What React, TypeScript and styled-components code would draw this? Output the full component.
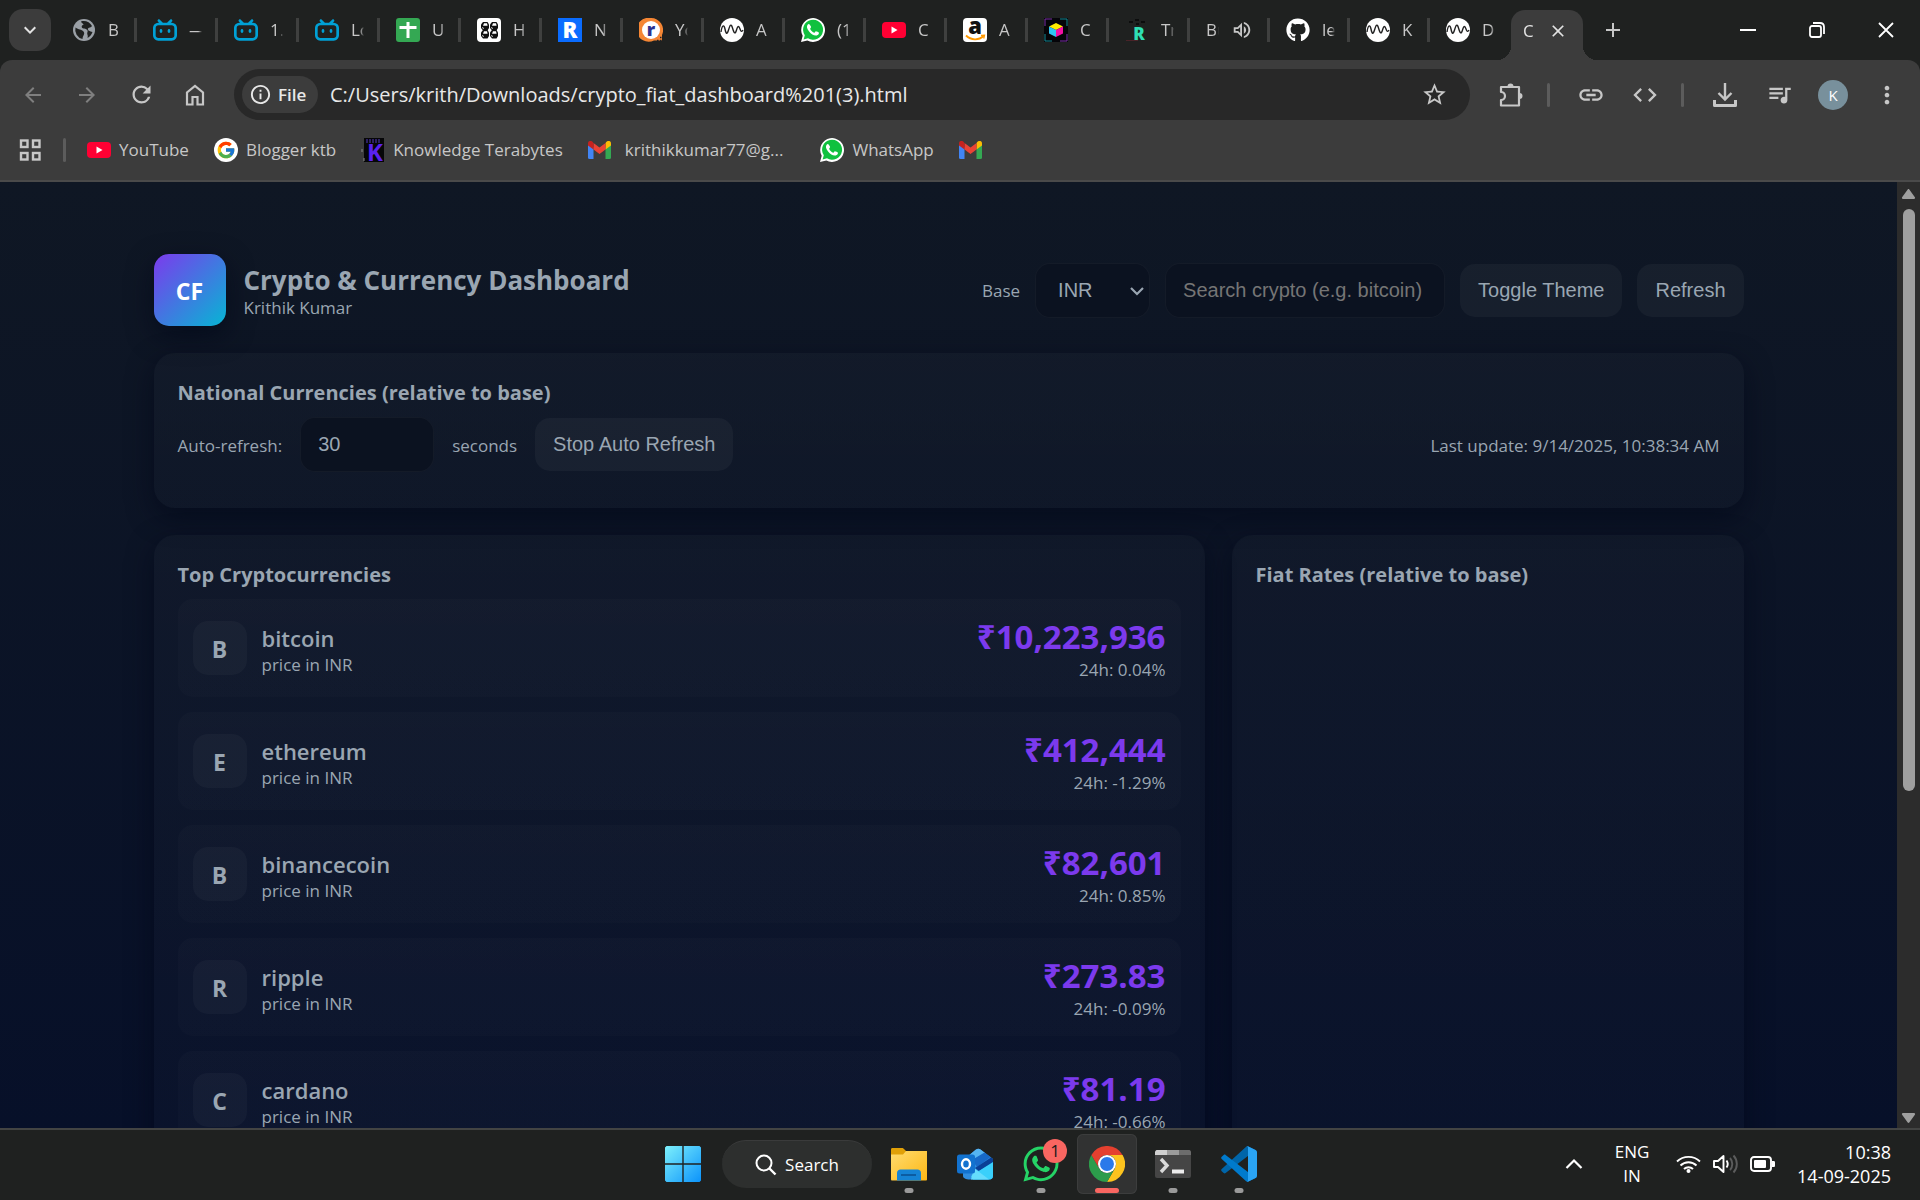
import React, { useState } from "react";
import styled, { createGlobalStyle } from "styled-components";
import { SiBilibili } from "react-icons/si";
import { FaWhatsapp, FaGithub } from "react-icons/fa";
import { FcGoogle } from "react-icons/fc";
import {
  MdArrowBack,
  MdArrowForward,
  MdRefresh,
  MdStarBorder,
  MdLink,
  MdCode,
  MdQueueMusic,
  MdMoreVert,
  MdPublic,
  MdAdd,
  MdClose,
  MdKeyboardArrowDown,
  MdOutlineInfo,
  MdOutlineVolumeUp,
} from "react-icons/md";

const ui = '"Open Sans", "Noto Sans", sans-serif';
const control = '"Liberation Sans", Arial, sans-serif';

const GlobalStyle = createGlobalStyle`
  *, *::before, *::after { box-sizing: border-box; }
  body { margin: 0; background: #1f2120; font-family: ${ui}; }
  button, input, select { font: inherit; color: inherit; margin: 0; }
  h1, h2, h3, p, ul { margin: 0; padding: 0; }
  ul { list-style: none; }
`;

/* ---------- window frame ---------- */

const Desktop = styled.div`
  display: flex;
  flex-direction: column;
  height: 100vh;
  overflow: hidden;
`;

const PlainButton = styled.button`
  display: flex;
  align-items: center;
  justify-content: center;
  padding: 0;
  border: 0;
  background: none;
`;

const TabStrip = styled.div`
  display: flex;
  align-items: center;
  height: 60px;
  flex: none;
  padding-left: 9px;
  background: #1f2120;
  color: #c7c7c7;
`;

const TabSearch = styled(PlainButton)`
  width: 42px;
  height: 42px;
  margin-right: 5px;
  border-radius: 14px;
  background: #3c3c3c;
  color: #e3e3e3;
  font-size: 24px;
`;

const Tabs = styled.div`
  display: flex;
  align-items: center;
  align-self: stretch;
`;

const Tab = styled(PlainButton)<{ $narrow?: boolean; $last?: boolean }>`
  justify-content: flex-start;
  gap: 12px;
  width: ${(p) => (p.$narrow ? 80 : 81)}px;
  height: 24px;
  padding-left: 16px;
  border-right: 3px solid ${(p) => (p.$last ? "transparent" : "#3f403f")};
`;

const TabLabel = styled.span`
  width: 13px;
  overflow: hidden;
  white-space: nowrap;
  text-align: left;
  font-size: 17px;
  line-height: 26px;
  mask-image: linear-gradient(90deg, #000 70%, transparent);
`;

const Favicon = styled.span`
  display: flex;
  width: 24px;
  height: 24px;
  flex: none;
  font-size: 24px;

  svg {
    width: 24px;
    height: 24px;
  }
`;

const ActiveTab = styled.div`
  position: relative;
  display: flex;
  align-items: center;
  align-self: flex-end;
  gap: 12px;
  width: 72px;
  height: 50px;
  margin-left: 1px;
  padding: 0 0 9px 12px;
  border-radius: 14px 14px 0 0;
  background: #3c3c3c;
  color: #e3e3e3;
  font-size: 20px;

  &::before,
  &::after {
    content: "";
    position: absolute;
    bottom: 0;
    width: 14px;
    height: 14px;
  }
  &::before {
    right: 100%;
    background: radial-gradient(circle at 0 0, transparent 14px, #3c3c3c 14px);
  }
  &::after {
    left: 100%;
    background: radial-gradient(circle at 100% 0, transparent 14px, #3c3c3c 14px);
  }
`;

const NewTab = styled(PlainButton)`
  width: 36px;
  height: 36px;
  margin-left: 12px;
  font-size: 24px;
`;

const WindowButtons = styled.div`
  display: flex;
  align-self: stretch;
  margin-left: auto;
  color: #fff;
`;

const WindowButton = styled(PlainButton)`
  width: 69px;
`;

const Toolbar = styled.div`
  display: flex;
  align-items: center;
  gap: 18px;
  height: 69px;
  flex: none;
  padding: 0 15px;
  border-radius: 12px 12px 0 0;
  background: #3c3c3c;
  color: #c7c7c7;
`;

const ToolbarBack = styled.div`
  background: linear-gradient(#1f2120 50%, #3c3c3c 50%);
`;

const ToolButton = styled(PlainButton)<{ $dim?: boolean }>`
  width: 36px;
  height: 36px;
  flex: none;
  font-size: 24px;
  color: ${(p) => (p.$dim ? "#7f7f7f" : "#c7c7c7")};
`;

const Omnibox = styled.div`
  display: flex;
  align-items: center;
  flex: 1;
  height: 51px;
  margin: 0 5px 0 3px;
  padding: 0 18px 0 8px;
  border-radius: 26px;
  background: #282828;
  color: #e8e8e8;
`;

const SchemeChip = styled(PlainButton)`
  justify-content: flex-start;
  gap: 6px;
  width: 76px;
  height: 37px;
  margin-right: 12px;
  padding-left: 7px;
  border-radius: 19px;
  background: #3c3c3c;
  font-size: 17px;
  font-weight: 600;

  svg {
    font-size: 23px;
  }
`;

const Address = styled.input`
  flex: 1;
  min-width: 0;
  padding: 0;
  border: 0;
  outline: 0;
  background: none;
  font-size: 20px;
`;

const Separator = styled.span<{ $wide?: boolean }>`
  width: 3px;
  height: 24px;
  margin-right: ${(p) => (p.$wide ? 5 : 0)}px;
  border-radius: 2px;
  background: #5c5c5c;
`;

const Avatar = styled.span`
  display: flex;
  align-items: center;
  justify-content: center;
  width: 30px;
  height: 30px;
  border-radius: 50%;
  background: #78909c;
  color: #fff;
  font-size: 15px;
`;

const Bookmarks = styled.nav`
  display: flex;
  align-items: center;
  height: 53px;
  flex: none;
  padding: 0 15px 9px 18px;
  border-bottom: 2px solid #4a4a4a;
  background: #3c3c3c;
  color: #c7c7c7;
`;

const AppsButton = styled(PlainButton)`
  margin-right: 21px;
`;

const BookmarkList = styled.div`
  display: flex;
  align-items: center;
  gap: 25px;
  margin-left: 21px;
`;

const BookmarkLink = styled.a<{ $roomy?: boolean }>`
  display: flex;
  align-items: center;
  gap: ${(p) => (p.$roomy ? 14 : 8)}px;
  margin-right: ${(p) => (p.$roomy ? 12 : 0)}px;
  color: inherit;
  text-decoration: none;
  font-size: 17px;
  line-height: 24px;
`;

/* ---------- dashboard page ---------- */

const Viewport = styled.div`
  display: flex;
  flex: 1;
  min-height: 0;
`;

const Page = styled.main`
  flex: 1;
  min-width: 0;
  overflow: hidden;
  padding: 72px 24px 0;
  background: linear-gradient(180deg, #0f1724 0%, #071029 100%);
  color: #9aa6b2;
`;

const Container = styled.div`
  display: flex;
  flex-direction: column;
  gap: 27px;
  max-width: 1590px;
  margin: 0 auto;
`;

const Header = styled.header`
  display: flex;
  align-items: center;
  justify-content: space-between;
`;

const Brand = styled.div`
  display: flex;
  align-items: center;
  gap: 18px;
`;

const Logo = styled.div`
  display: flex;
  align-items: center;
  justify-content: center;
  width: 72px;
  height: 72px;
  padding-top: 2px;
  border-radius: 15px;
  background: linear-gradient(135deg, #7c3aed, #06b6d4);
  box-shadow: 0 9px 27px rgba(2, 6, 23, 0.6);
  color: #fff;
  font-size: 23px;
  font-weight: 700;
`;

const TextStack = styled.div`
  padding-top: 4px;
`;

const Title = styled.h1`
  font-size: 26px;
  line-height: 32px;
  font-weight: 700;
`;

const Small = styled.p`
  font-size: 17px;
  line-height: 24px;
`;

const Controls = styled.div`
  display: flex;
  align-items: center;
  gap: 15px;
`;

const FieldLabel = styled.label`
  padding-top: 2px;
  font-size: 17px;
  line-height: 24px;
`;

const SelectWrap = styled.div`
  position: relative;

  svg {
    position: absolute;
    right: 5px;
    top: 20px;
    pointer-events: none;
  }
`;

const fieldStyle = `
  height: 55px;
  border: 1px solid rgba(255, 255, 255, 0.04);
  border-radius: 15px;
  background: #0b1220;
  outline: 0;
  font-family: ${control};
  font-size: 20px;
`;

const Select = styled.select`
  ${fieldStyle}
  appearance: none;
  width: 115px;
  padding: 0 22px;
  color: #9aa6b2;
`;

const TextField = styled.input<{ $width: number }>`
  ${fieldStyle}
  appearance: textfield;
  width: ${(p) => p.$width}px;
  padding: 0 17px;

  &::placeholder {
    color: #757575;
  }
  &::-webkit-inner-spin-button {
    display: none;
  }
`;

const Button = styled.button`
  height: 53px;
  padding: 0 18px;
  border: 0;
  border-radius: 15px;
  background: rgba(255, 255, 255, 0.04);
  font-family: ${control};
  font-size: 20px;
`;

const Card = styled.section`
  padding: 24px;
  border-radius: 21px;
  background: linear-gradient(180deg, rgba(255, 255, 255, 0.02), rgba(255, 255, 255, 0.01));
  box-shadow: 0 9px 27px rgba(2, 6, 23, 0.6);
`;

const CardTitle = styled.h2`
  margin-bottom: 8px;
  font-size: 20px;
  line-height: 32px;
  font-weight: 700;
`;

const RefreshRow = styled.div`
  display: flex;
  align-items: center;
  gap: 18px;
  margin-bottom: 12px;
`;

const RowNote = styled(Small)<{ $end?: boolean }>`
  padding-top: 2px;
  margin-left: ${(p) => (p.$end ? "auto" : 0)};
`;

const Columns = styled.div`
  display: grid;
  grid-template-columns: 1051fr 512fr;
  gap: 27px;
`;

const CoinList = styled.ul`
  display: flex;
  flex-direction: column;
  gap: 15px;
`;

const CoinRow = styled.li`
  display: flex;
  align-items: center;
  gap: 15px;
  height: 98px;
  padding: 0 15px;
  border-radius: 15px;
  background: linear-gradient(180deg, rgba(255, 255, 255, 0.015), rgba(255, 255, 255, 0.01));
`;

const CoinBadge = styled.div`
  display: flex;
  align-items: center;
  justify-content: center;
  width: 54px;
  height: 54px;
  padding-top: 2px;
  border-radius: 15px;
  background: rgba(255, 255, 255, 0.03);
  font-size: 23px;
  font-weight: 700;
`;

const CoinName = styled.h3`
  font-size: 22px;
  line-height: 30px;
  font-weight: 600;
`;

const CoinValue = styled.div`
  margin-left: auto;
  padding-top: 2px;
  text-align: right;
`;

const Price = styled.p`
  color: #7c3aed;
  font-size: 33px;
  line-height: 42px;
  font-weight: 700;
`;

const Scrollbar = styled.div`
  display: flex;
  flex-direction: column;
  align-items: center;
  justify-content: space-between;
  width: 23px;
  flex: none;
  padding: 6px 0 4px;
  background: #2c2c2c;
`;

const Track = styled.div`
  flex: 1;
  width: 12px;
  margin: 9px 0 7px;
`;

const Thumb = styled.div`
  height: 65%;
  border-radius: 6px;
  background: #9f9f9f;
`;

/* ---------- taskbar ---------- */

const Taskbar = styled.footer`
  display: grid;
  grid-template-columns: 1fr auto 1fr;
  align-items: center;
  height: 72px;
  flex: none;
  padding-bottom: 2px;
  border-top: 2px solid #434443;
  background: #1f2120;
  color: #fff;
`;

const Apps = styled.div`
  grid-column: 2;
  display: flex;
  align-items: center;
  gap: 6px;
  padding-left: 2px;
`;

const AppTile = styled(PlainButton)<{ $active?: boolean }>`
  position: relative;
  width: 60px;
  height: 60px;
  border-radius: 6px;
  background: ${(p) => (p.$active ? "#313232" : "none")};
  box-shadow: ${(p) => (p.$active ? "inset 0 0 0 1px #3c3d3d" : "none")};
`;

const RunMark = styled.span<{ $active?: boolean }>`
  position: absolute;
  left: 50%;
  bottom: 1px;
  width: ${(p) => (p.$active ? 24 : 9)}px;
  height: 5px;
  border-radius: 3px;
  transform: translateX(-50%);
  background: ${(p) => (p.$active ? "#f96661" : "#9a9a9a")};
`;

const CountBadge = styled.span`
  position: absolute;
  top: 5px;
  right: 4px;
  width: 24px;
  height: 24px;
  border-radius: 50%;
  background: #f96661;
  color: #1b1b1b;
  font-size: 17px;
  line-height: 24px;
`;

const SearchPill = styled(PlainButton)`
  gap: 8px;
  width: 150px;
  height: 48px;
  margin: 0 1px 0 3px;
  border-radius: 24px;
  border-top: 1px solid #3a3b3b;
  background: #2d2f2e;
  font-size: 17px;
`;

const Tray = styled.div`
  display: flex;
  align-items: center;
  justify-content: flex-end;
  padding-right: 29px;
  font-size: 18px;
  line-height: 24px;
`;

const Language = styled(PlainButton)`
  width: 60px;
  margin: 0 14px 0 19px;
  text-align: center;
  font-size: 17px;
`;

const QuickSettings = styled(PlainButton)`
  gap: 12px;
`;

const Clock = styled(PlainButton)`
  margin-left: 22px;
  text-align: right;
`;

/* ---------- drawings ---------- */

const RoundedTile = ({ fill }: { fill: string }) => <rect width="24" height="24" rx="4" fill={fill} />;

const GlobeIcon = () => (
  <svg viewBox="0 0 24 24">
    <circle cx="12" cy="12" r="11" fill="#9aa0a6" />
    <path
      d="M3.500 9.500c3 2.500 6 1.500 8 4s-1 4-1 7.500A9.500 9.500 0 0 1 3.500 9.500zM9 3.500c4-1.500 9 .5 11 4.500-1 2-3 1-4 2.500s2 3 4.500 3.500c-1 3-3 5-5 6 1-3-1-4 0-6s-2-3.500-4-3.500-2.500-3-.5-3.500S9.500 5.500 9 3.500z"
      fill="#1f2120"
    />
  </svg>
);

const YouTubeIcon = () => (
  <svg width="24" height="24" viewBox="0 0 24 24">
    <rect y="4" width="24" height="16" rx="4" fill="#ff0033" />
    <path d="M9.500 8.500v7l6-3.500z" fill="#fff" />
  </svg>
);

const WhatsAppBubble = () => (
  <svg width="24" height="24" viewBox="0 0 24 24">
    <path d="M0 24l1.700-6.200A11.900 11.900 0 1 1 6.300 22.400z" fill="#fff" />
    <path d="M2.600 21.400l1.200-4.100A10 10 0 1 1 7 20.300z" fill="#10c13f" />
    <path
      d="M8.500 6.500c-.5-.6-1.200-.5-1.700.1-1.600 1.900-.8 4.200 1.300 6.900 2.300 2.900 5 4.500 7.600 4 1.400-.3 2.400-1.500 2.200-2.700-.1-.5-2.700-1.700-3.100-1.500-.5.3-.9 1.500-1.500 1.400-1.700-.5-3.400-2.200-4.100-3.800-.2-.5.9-1.100.9-1.800 0-.6-1.100-2.300-1.600-2.600z"
      fill="#fff"
    />
  </svg>
);

const WaveIcon = () => (
  <svg width="24" height="24" viewBox="0 0 24 24">
    <circle cx="12" cy="12" r="12" fill="#fff" />
    <path
      d="M1 14C2 7 4 6 5 11s2 6 3.500 1S11 5 12.500 10s2.500 7 4 2S19 8 20 11s2 3 3 1"
      fill="none"
      stroke="#222"
      strokeWidth="1.400"
    />
  </svg>
);

const SheetIcon = () => (
  <svg viewBox="0 0 24 24">
    <rect width="24" height="24" rx="3" fill="#34a853" />
    <path d="M12 4v16M3.500 9.500h17" stroke="#fff" strokeWidth="3" />
  </svg>
);

const HexTilesIcon = () => (
  <svg viewBox="0 0 24 24">
    <RoundedTile fill="#fff" />
    {[3, 12].map((x) =>
      [4, 12].map((y) => (
        <g key={`${x}-${y}`} transform={`translate(${x} ${y})`}>
          <path d="M3 0h4.500L9 2.500V6L7.500 8.500H3L1 6V2.500z" fill="#111" />
          <path d="M4 1.200h3l.6 2.500H3z" fill="#fff" />
          <path d="M2.500 5l1 2" stroke="#fff" strokeWidth=".8" />
        </g>
      ))
    )}
  </svg>
);

const LetterTile = ({ letter, bg, fg, size = 20 }: { letter: string; bg: string; fg: string; size?: number }) => (
  <svg viewBox="0 0 24 24">
    <rect width="24" height="24" fill={bg} />
    <text x="12" y="20" textAnchor="middle" fontFamily={ui} fontWeight="800" fontSize={size} fill={fg}>
      {letter}
    </text>
  </svg>
);

const OrangeRIcon = () => (
  <svg viewBox="0 0 24 24">
    <path d="M12 0a12 12 0 0 1 11 17v5.500H15A12 12 0 1 1 12 0z" fill="#f58634" />
    <circle cx="12" cy="12" r="9" fill="#fff" />
    <path d="M18 22.500h1.500M21 22.500h1.500M21 19.500h1.500" stroke="#222" strokeWidth="1.500" />
    <text x="12" y="18" textAnchor="middle" fontFamily={ui} fontWeight="800" fontSize="18" fill="#2b3190">
      r
    </text>
  </svg>
);

const AmazonIcon = () => (
  <svg viewBox="0 0 24 24">
    <RoundedTile fill="#fff" />
    <text x="12" y="16" textAnchor="middle" fontFamily={ui} fontWeight="800" fontSize="22" fill="#111">
      a
    </text>
    <path d="M3 17.500c5 5 13 5 17.500.5" fill="none" stroke="#f90" strokeWidth="1.800" />
    <path d="M18 17.500l3.500-.3-.8 3.300" fill="none" stroke="#f90" strokeWidth="1.300" />
  </svg>
);

const CubeIcon = () => (
  <svg viewBox="0 0 24 24">
    <rect width="24" height="24" fill="#050509" />
    <path d="M1 8V1h7M23 16v7h-7" stroke="#7c2fa8" fill="none" />
    <path d="M16 1h7v7M8 23H1v-7" stroke="#138a94" fill="none" />
    <path d="M12 5l7 3.500-7 3.500-7-3.500z" fill="#ffed00" />
    <path d="M5 8.500l7 3.500v7l-7-3.500z" fill="#2fc4f2" />
    <path d="M19 8.500L12 12v7l7-3.500z" fill="#f40fa5" />
  </svg>
);

const GreenRIcon = () => (
  <svg viewBox="0 0 24 24">
    <path d="M4 4h4M10 2h4M16 4h4M11 6h3" stroke="#0c0d0d" strokeWidth="2" />
    <path d="M1 22.500h12" stroke="#4a2328" />
    <text x="14" y="22" textAnchor="middle" fontFamily={ui} fontWeight="800" fontSize="17" fill="#2fe0b5">
      R
    </text>
  </svg>
);

const GmailIcon = () => (
  <svg width="23" height="18" viewBox="0 0 46 36">
    <path d="M0 6v27a3 3 0 0 0 3 3h8V13z" fill="#4285f4" />
    <path d="M46 6v27a3 3 0 0 1-3 3h-8V13z" fill="#34a853" />
    <path d="M35 4v13l11-8V5c0-5-5-6.500-8.500-4z" fill="#fbbc04" />
    <path d="M11 17V4l12 9 12-9v13l-12 9z" fill="#ea4335" />
    <path d="M0 5v4l11 8V4L8.500 1C5-1.500 0 0 0 5z" fill="#c5221f" />
  </svg>
);

const PurpleKIcon = () => (
  <svg width="24" height="24" viewBox="0 0 24 24">
    <rect x="3" width="20" height="24" fill="#060608" />
    <path d="M5 2h15M5 4h15" stroke="#3a2a80" strokeWidth="1.500" strokeDasharray="2 1" />
    <path d="M1 11v3M3 20v3" stroke="#8a8a8a" />
    <text x="14" y="23" textAnchor="middle" fontFamily={ui} fontWeight="700" fontSize="24" fill="#5a22f0">
      K
    </text>
  </svg>
);

const HomeIcon = () => (
  <svg width="24" height="24" viewBox="0 0 24 24" fill="none" stroke="currentColor" strokeWidth="2.200">
    <path d="M4 21.500V9.500L12 3l8 6.500v12h-5.500V14h-5v7.500z" />
  </svg>
);

const ExtensionIcon = () => (
  <svg width="26" height="26" viewBox="0 0 26 26">
    <path
      d="M3 5H21v18.500H3v-5.500c2 0 4-1.500 4-4s-2-4-4-4V5z"
      fill="none"
      stroke="currentColor"
      strokeWidth="2.200"
      strokeLinejoin="round"
    />
    <path d="M9.500 4.500a3 3 0 0 1 6 0zM21.500 11v6a3 3 0 0 0 0-6z" fill="currentColor" />
  </svg>
);

const DownloadIcon = () => (
  <svg width="26" height="26" viewBox="0 0 26 26" fill="none" stroke="currentColor">
    <path d="M13 1v16M6.500 11l6.500 6.500 6.500-6.500" strokeWidth="2.400" />
    <path d="M2.500 18v5.500h21V18" strokeWidth="3" strokeLinejoin="round" />
  </svg>
);

const AppsGridIcon = () => (
  <svg width="24" height="24" viewBox="0 0 24 24" fill="none" stroke="currentColor" strokeWidth="2.400">
    <rect x="3" y="2.500" width="6.500" height="6.500" />
    <rect x="15" y="2.500" width="6.500" height="6.500" />
    <rect x="3" y="15" width="6.500" height="6.500" />
    <rect x="15" y="15" width="6.500" height="6.500" />
  </svg>
);

const WindowsIcon = () => (
  <svg width="36" height="36" viewBox="0 0 36 36">
    <defs>
      <linearGradient id="win" x1="0" y1="0" x2="1" y2="1">
        <stop offset="0" stopColor="#7df0fb" />
        <stop offset="1" stopColor="#0b93fb" />
      </linearGradient>
    </defs>
    <path
      d="M1.500 0H17.300V17.300H0V1.500zM18.700 0H34.500L36 1.500V17.300H18.700zM0 18.700H17.300V36H1.500L0 34.500zM18.700 18.700H36V34.500L34.500 36H18.700z"
      fill="url(#win)"
    />
  </svg>
);

const FolderIcon = () => (
  <svg width="36" height="36" viewBox="0 0 36 36">
    <defs>
      <linearGradient id="folder" x1="0" y1="0" x2="1" y2="1">
        <stop offset="0" stopColor="#ffdc70" />
        <stop offset="1" stopColor="#fdb714" />
      </linearGradient>
    </defs>
    <path d="M0 3.500C0 2.500.5 2 1.500 2H11c1 0 1.500.5 2 1L15 5v4H0z" fill="#e0a008" />
    <path d="M0 8.500h12L15 5h21v28.500c0 .5-.5 1-1 1H1c-.5 0-1-.5-1-1z" fill="url(#folder)" />
    <path d="M6 34.500V27c0-2 1.500-3.500 3.500-3.500h17c2 0 3.500 1.500 3.500 3.500v7.500z" fill="#1583d4" />
    <path d="M10 29h15" stroke="#0b5394" strokeWidth="1.600" />
  </svg>
);

const OutlookIcon = () => (
  <svg width="36" height="32" viewBox="0 0 36 32">
    <path d="M6 12L19 1.500c1.500-1 3-1 4.500 0L36 11v17c0 2-1.500 3.500-3.500 3.500h-20C9 31.500 6 30 6 28z" fill="#2f8de0" />
    <path d="M13 6.500L19 1.500c1.500-1 3-1 4.500 0l4.500 3.400L15 12z" fill="#55b4f2" />
    <path d="M15 12l12.500-7.500 6 4.500L20 19z" fill="#1769c8" />
    <path d="M18 20L34 9.500l2 1.500v4L22 23z" fill="#0a3f96" />
    <path d="M36 14v14c0 2-1.500 3.500-3.500 3.500H16L14 28z" fill="#3ad0fb" />
    <path d="M14 31.500L17 20l15 11.500z" fill="#65dcfd" />
    <rect y="6.500" width="18" height="19" rx="2.500" fill="#1272cf" />
    <ellipse cx="9" cy="16" rx="4" ry="4.700" fill="none" stroke="#fff" strokeWidth="2.400" />
  </svg>
);

const ChromeIcon = () => (
  <svg width="36" height="36" viewBox="0 0 48 48">
    <path d="M24 12H44.800A24 24 0 0 1 24 48L34.400 30A12 12 0 0 0 24 12z" fill="#fcc31e" />
    <path d="M13.600 30L3.200 12A24 24 0 0 0 24 48L34.400 30A12 12 0 0 1 13.600 30z" fill="#2c9c4b" />
    <path d="M3.200 12A24 24 0 0 1 44.800 12H24A12 12 0 0 0 13.600 30z" fill="#e5402f" />
    <circle cx="24" cy="24" r="12" fill="#fff" />
    <circle cx="24" cy="24" r="9.300" fill="#2a79ea" />
  </svg>
);

const TerminalIcon = () => (
  <svg width="36" height="28" viewBox="0 0 36 28">
    <rect width="36" height="28" rx="2" fill="#454545" />
    <path d="M1.500 0H12v5H0V1.500z" fill="#cfcfcf" />
    <path d="M12 0h12v5H12z" fill="#9b9b9b" />
    <path d="M24 0h10.500L36 1.500V5H24z" fill="#6c6c6c" />
    <path d="M6 9l6 6.500L6 22" fill="none" stroke="#d9d9d9" strokeWidth="3.400" />
    <rect x="17" y="19.500" width="12" height="4" fill="#ececec" />
  </svg>
);

const VsCodeIcon = () => (
  <svg width="36" height="36" viewBox="0 0 100 100">
    <path
      d="M96 11L76 1.500c-2.300-1.100-5-.6-6.900 1.200L2 64c-2 1.600-2 4.500 0 6l5.500 5c1.500 1.400 3.700 1.500 5.300.2L93 14c2.800-2 6.800 0 6.800 3.300v-.2c0-2.600-1.400-5-3.800-6.100z"
      fill="#0065a9"
    />
    <path
      d="M96 89l-20 9.500c-2.300 1.100-5 .6-6.900-1.200L2 36c-2-1.600-2-4.500 0-6l5.500-5c1.500-1.400 3.700-1.500 5.300-.2L93 86c2.800 2 6.800 0 6.800-3.300v.2c0 2.600-1.400 5-3.800 6.100z"
      fill="#007acc"
    />
    <path
      d="M76 98.500c-2.300 1.100-5 .6-6.900-1.200 2.200 2.200 5.900.7 5.900-2.500V5.200c0-3.200-3.700-4.700-5.900-2.500C71 .9 73.700.4 76 1.500l20 9.600c2.400 1.100 4 3.600 4 6.300v65.200c0 2.700-1.600 5.200-4 6.300z"
      fill="#2aa4f4"
    />
  </svg>
);

const MagnifierIcon = () => (
  <svg width="22" height="22" viewBox="0 0 22 22" fill="none" stroke="#fff" strokeWidth="2">
    <circle cx="9" cy="9" r="7.500" />
    <path d="M14.500 14.500l6 6" strokeWidth="2.400" />
  </svg>
);

const ChevronUp = () => (
  <svg width="18" height="12" viewBox="0 0 18 12" fill="none" stroke="#fff" strokeWidth="2.200">
    <path d="M1.500 10L9 2.500l7.500 7.500" />
  </svg>
);

const WifiIcon = () => (
  <svg width="25" height="20" viewBox="0 0 25 20" fill="none" stroke="#fff" strokeWidth="1.900">
    <path d="M1 7.500a16.500 16.500 0 0 1 23 0M4.500 11.500a11.500 11.500 0 0 1 16 0M8 15a6.500 6.500 0 0 1 9 0" />
    <circle cx="12.500" cy="17" r="2" fill="#fff" stroke="none" />
  </svg>
);

const VolumeIcon = () => (
  <svg width="25" height="20" viewBox="0 0 25 20" fill="none" stroke="#fff" strokeWidth="1.900">
    <path d="M1 7v6h4l5.500 5V2L5 7z" strokeLinejoin="round" />
    <path d="M13.500 6.500a6 6 0 0 1 0 7" />
    <path d="M17 4a9 9 0 0 1 0 12M20.500 1.500a12.500 12.500 0 0 1 0 17" stroke="#5b5c5c" />
  </svg>
);

const BatteryIcon = () => (
  <svg width="25" height="16" viewBox="0 0 25 16">
    <rect x="1" y="1" width="20" height="14" rx="3" fill="none" stroke="#fff" strokeWidth="1.900" />
    <rect x="4" y="4" width="12" height="8" rx="1" fill="#fff" />
    <path d="M22 5h1.500c1 0 1.500.5 1.500 1.500v3c0 1-.5 1.500-1.500 1.500H22z" fill="#fff" />
  </svg>
);

const Triangle = ({ down }: { down?: boolean }) => (
  <svg width="15" height="12" viewBox="0 0 15 12">
    <path
      d={
        down
          ? "M2 1h11c1 0 1.400 1 .9 1.700L8.300 10.500c-.4.6-1.200.6-1.600 0L1.100 2.700C.6 2 1 1 2 1z"
          : "M2 11h11c1 0 1.400-1 .9-1.700L8.300 1.500c-.4-.6-1.200-.6-1.600 0L1.100 9.300C.6 10 1 11 2 11z"
      }
      fill="#9f9f9f"
    />
  </svg>
);

/* ---------- data ---------- */

const bili = <SiBilibili color="#00a1d6" />;

const tabs: { icon: React.ReactNode; label: string }[] = [
  { icon: <GlobeIcon />, label: "B" },
  { icon: bili, label: "—" },
  { icon: bili, label: "1." },
  { icon: bili, label: "Lo" },
  { icon: <SheetIcon />, label: "U" },
  { icon: <HexTilesIcon />, label: "H" },
  { icon: <LetterTile letter="R" bg="#0a6cff" fg="#fff" size={22} />, label: "N" },
  { icon: <OrangeRIcon />, label: "Yo" },
  { icon: <WaveIcon />, label: "A" },
  { icon: <WhatsAppBubble />, label: "(1" },
  { icon: <YouTubeIcon />, label: "C" },
  { icon: <AmazonIcon />, label: "A" },
  { icon: <CubeIcon />, label: "C" },
  { icon: <GreenRIcon />, label: "Tr" },
];

const lateTabs: { icon: React.ReactNode; label: string }[] = [
  { icon: <FaGithub color="#fff" />, label: "le" },
  { icon: <WaveIcon />, label: "K" },
  { icon: <WaveIcon />, label: "D" },
];

const bookmarks: { icon: React.ReactNode; label: string; roomy?: boolean }[] = [
  { icon: <YouTubeIcon />, label: "YouTube" },
  {
    icon: (
      <svg width="24" height="24" viewBox="0 0 24 24">
        <circle cx="12" cy="12" r="12" fill="#fff" />
        <FcGoogle x="2" y="2" width="20" height="20" size={20} />
      </svg>
    ),
    label: "Blogger ktb",
  },
  { icon: <PurpleKIcon />, label: "Knowledge Terabytes" },
  { icon: <GmailIcon />, label: "krithikkumar77@g...", roomy: true },
  { icon: <WhatsAppBubble />, label: "WhatsApp" },
];

const coins = [
  { name: "bitcoin", price: "₹10,223,936", change: "0.04%" },
  { name: "ethereum", price: "₹412,444", change: "-1.29%" },
  { name: "binancecoin", price: "₹82,601", change: "0.85%" },
  { name: "ripple", price: "₹273.83", change: "-0.09%" },
  { name: "cardano", price: "₹81.19", change: "-0.66%" },
];

/* ---------- sections ---------- */

function BrowserTabs() {
  return (
    <TabStrip>
      <TabSearch aria-label="Search tabs">
        <MdKeyboardArrowDown />
      </TabSearch>
      <Tabs>
        {tabs.map((t, i) => (
          <Tab key={i}>
            <Favicon>{t.icon}</Favicon>
            <TabLabel>{t.label}</TabLabel>
          </Tab>
        ))}
        <Tab $narrow>
          <TabLabel>Bu</TabLabel>
          <MdOutlineVolumeUp size={22} />
        </Tab>
        {lateTabs.map((t, i) => (
          <Tab key={i} $narrow $last={i === lateTabs.length - 1}>
            <Favicon>{t.icon}</Favicon>
            <TabLabel>{t.label}</TabLabel>
          </Tab>
        ))}
        <ActiveTab>
          <TabLabel>C</TabLabel>
          <PlainButton aria-label="Close tab">
            <MdClose />
          </PlainButton>
        </ActiveTab>
      </Tabs>
      <NewTab aria-label="New tab">
        <MdAdd />
      </NewTab>
      <WindowButtons>
        <WindowButton aria-label="Minimize">
          <svg width="16" height="16" viewBox="0 0 16 16">
            <path d="M0 8h16" stroke="#fff" strokeWidth="2" />
          </svg>
        </WindowButton>
        <WindowButton aria-label="Restore">
          <svg width="16" height="16" viewBox="0 0 16 16" fill="none" stroke="#fff" strokeWidth="1.800">
            <rect x="1" y="4" width="11" height="11" rx="2" />
            <path d="M4 1h7c2.500 0 4 1.500 4 4v7" />
          </svg>
        </WindowButton>
        <WindowButton aria-label="Close">
          <svg width="16" height="16" viewBox="0 0 16 16">
            <path d="M1 1l14 14M15 1L1 15" stroke="#fff" strokeWidth="1.800" />
          </svg>
        </WindowButton>
      </WindowButtons>
    </TabStrip>
  );
}

function BrowserToolbar() {
  const [url, setUrl] = useState("C:/Users/krith/Downloads/crypto_fiat_dashboard%201(3).html");
  return (
    <ToolbarBack>
      <Toolbar>
        <ToolButton $dim aria-label="Back">
          <MdArrowBack />
        </ToolButton>
        <ToolButton $dim aria-label="Forward">
          <MdArrowForward />
        </ToolButton>
        <ToolButton aria-label="Reload">
          <MdRefresh size={27} />
        </ToolButton>
        <ToolButton aria-label="Home">
          <HomeIcon />
        </ToolButton>
        <Omnibox>
          <SchemeChip>
            <MdOutlineInfo />
            File
          </SchemeChip>
          <Address aria-label="Address" value={url} onChange={(e) => setUrl(e.target.value)} />
          <ToolButton aria-label="Bookmark this page">
            <MdStarBorder size={27} />
          </ToolButton>
        </Omnibox>
        <ToolButton aria-label="Extensions">
          <ExtensionIcon />
        </ToolButton>
        <Separator $wide />
        <ToolButton aria-label="Copy link">
          <MdLink size={28} />
        </ToolButton>
        <ToolButton aria-label="Developer tools">
          <MdCode size={28} />
        </ToolButton>
        <Separator $wide />
        <ToolButton aria-label="Downloads">
          <DownloadIcon />
        </ToolButton>
        <ToolButton aria-label="Media">
          <MdQueueMusic size={27} />
        </ToolButton>
        <ToolButton aria-label="Profile">
          <Avatar>K</Avatar>
        </ToolButton>
        <ToolButton aria-label="Menu">
          <MdMoreVert size={28} />
        </ToolButton>
      </Toolbar>
    </ToolbarBack>
  );
}

function BookmarkBar() {
  return (
    <Bookmarks>
      <AppsButton aria-label="Apps">
        <AppsGridIcon />
      </AppsButton>
      <Separator />
      <BookmarkList>
        {bookmarks.map((b) => (
          <BookmarkLink key={b.label} href="#" $roomy={b.roomy}>
            {b.icon}
            {b.label}
          </BookmarkLink>
        ))}
        <BookmarkLink href="#" aria-label="Gmail">
          <GmailIcon />
        </BookmarkLink>
      </BookmarkList>
    </Bookmarks>
  );
}

function Dashboard() {
  const [base, setBase] = useState("INR");
  const [query, setQuery] = useState("");
  const [seconds, setSeconds] = useState("30");
  return (
    <Page>
      <Container>
        <Header>
          <Brand>
            <Logo>CF</Logo>
            <TextStack>
              <Title>Crypto &amp; Currency Dashboard</Title>
              <Small>Krithik Kumar</Small>
            </TextStack>
          </Brand>
          <Controls>
            <FieldLabel htmlFor="base">Base</FieldLabel>
            <SelectWrap>
              <Select id="base" value={base} onChange={(e) => setBase(e.target.value)}>
                <option>INR</option>
                <option>USD</option>
                <option>EUR</option>
              </Select>
              <svg width="16" height="16" viewBox="0 0 16 16" fill="none" stroke="#9aa6b2" strokeWidth="2.200">
                <path d="M2 5l6 6 6-6" />
              </svg>
            </SelectWrap>
            <TextField
              $width={280}
              aria-label="Search crypto"
              placeholder="Search crypto (e.g. bitcoin)"
              value={query}
              onChange={(e) => setQuery(e.target.value)}
            />
            <Button>Toggle Theme</Button>
            <Button>Refresh</Button>
          </Controls>
        </Header>

        <Card>
          <CardTitle>National Currencies (relative to base)</CardTitle>
          <RefreshRow>
            <FieldLabel htmlFor="interval">Auto-refresh:</FieldLabel>
            <TextField
              id="interval"
              type="number"
              $width={134}
              value={seconds}
              onChange={(e) => setSeconds(e.target.value)}
            />
            <RowNote>seconds</RowNote>
            <Button>Stop Auto Refresh</Button>
            <RowNote $end>Last update: 9/14/2025, 10:38:34 AM</RowNote>
          </RefreshRow>
        </Card>

        <Columns>
          <Card>
            <CardTitle>Top Cryptocurrencies</CardTitle>
            <CoinList>
              {coins.map((c) => (
                <CoinRow key={c.name}>
                  <CoinBadge>{c.name[0].toUpperCase()}</CoinBadge>
                  <TextStack>
                    <CoinName>{c.name}</CoinName>
                    <Small>price in {base}</Small>
                  </TextStack>
                  <CoinValue>
                    <Price>{c.price}</Price>
                    <Small>24h: {c.change}</Small>
                  </CoinValue>
                </CoinRow>
              ))}
            </CoinList>
          </Card>
          <Card>
            <CardTitle>Fiat Rates (relative to base)</CardTitle>
          </Card>
        </Columns>
      </Container>
    </Page>
  );
}

function SystemTaskbar() {
  return (
    <Taskbar>
      <Apps>
        <AppTile aria-label="Start">
          <WindowsIcon />
        </AppTile>
        <SearchPill>
          <MagnifierIcon />
          Search
        </SearchPill>
        <AppTile aria-label="File Explorer">
          <FolderIcon />
          <RunMark />
        </AppTile>
        <AppTile aria-label="Outlook">
          <OutlookIcon />
        </AppTile>
        <AppTile aria-label="WhatsApp">
          <FaWhatsapp size={40} color="#25d366" />
          <CountBadge>1</CountBadge>
          <RunMark />
        </AppTile>
        <AppTile $active aria-label="Chrome">
          <ChromeIcon />
          <RunMark $active />
        </AppTile>
        <AppTile aria-label="Terminal">
          <TerminalIcon />
          <RunMark />
        </AppTile>
        <AppTile aria-label="Visual Studio Code">
          <VsCodeIcon />
          <RunMark />
        </AppTile>
      </Apps>
      <Tray>
        <PlainButton aria-label="Show hidden icons">
          <ChevronUp />
        </PlainButton>
        <Language>
          ENG
          <br />
          IN
        </Language>
        <QuickSettings aria-label="Quick settings">
          <WifiIcon />
          <VolumeIcon />
          <BatteryIcon />
        </QuickSettings>
        <Clock>
          10:38
          <br />
          14-09-2025
        </Clock>
      </Tray>
    </Taskbar>
  );
}

export default function App() {
  return (
    <Desktop>
      <GlobalStyle />
      <BrowserTabs />
      <BrowserToolbar />
      <BookmarkBar />
      <Viewport>
        <Dashboard />
        <Scrollbar>
          <Triangle />
          <Track>
            <Thumb />
          </Track>
          <Triangle down />
        </Scrollbar>
      </Viewport>
      <SystemTaskbar />
    </Desktop>
  );
}
